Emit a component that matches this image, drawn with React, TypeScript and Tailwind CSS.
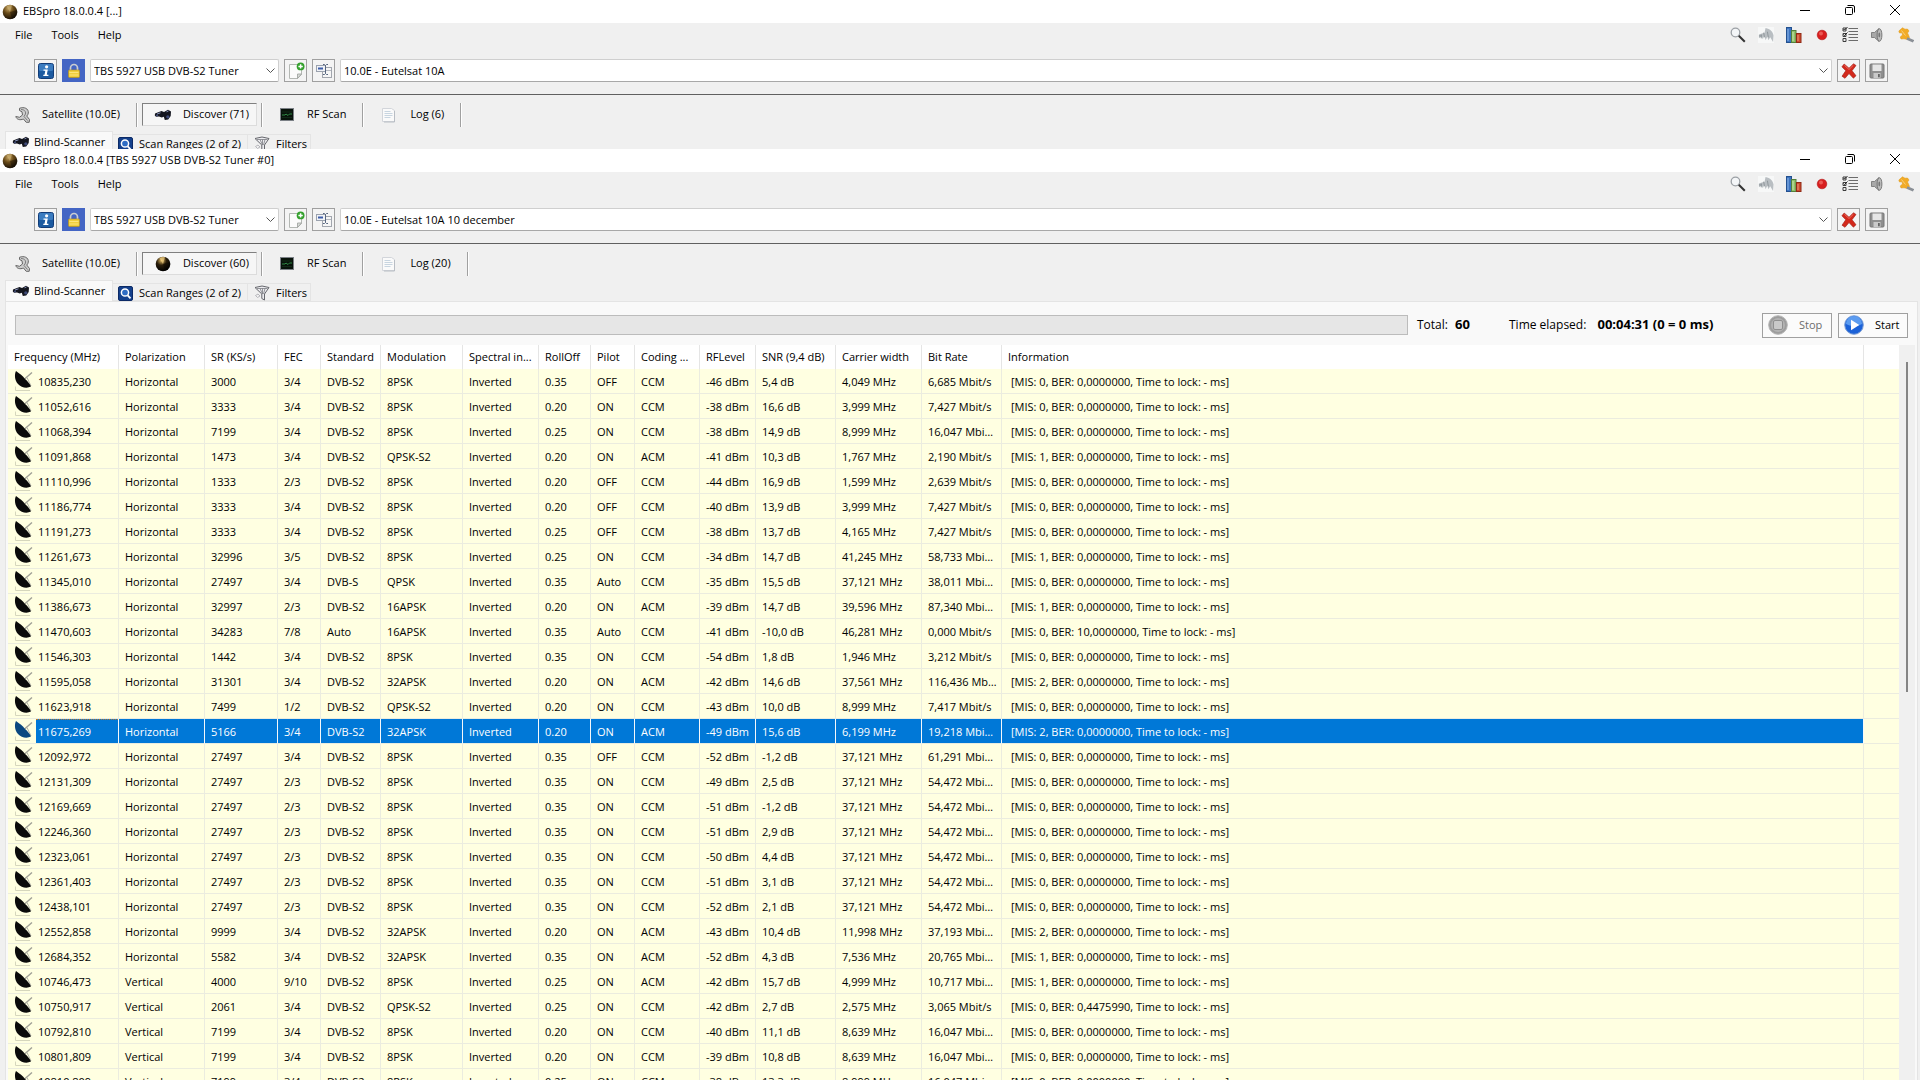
import { ReactNode } from 'react';

type Row = {
  freq: string;
  pol: string;
  sr: string;
  fec: string;
  standard: string;
  modulation: string;
  rollOff: string;
  pilot: string;
  coding: string;
  level: string;
  snr: string;
  width: string;
  bitRate: string;
  mis: number;
  ber?: string;
};

// freq|sr|fec|standard|modulation|rollOff|pilot|coding|level|snr|width|bitRate|mis|ber
const horizontal = [
  '10835,230|3000|3/4|DVB-S2|8PSK|0.35|OFF|CCM|-46|5,4|4,049|6,685|0',
  '11052,616|3333|3/4|DVB-S2|8PSK|0.20|ON|CCM|-38|16,6|3,999|7,427|0',
  '11068,394|7199|3/4|DVB-S2|8PSK|0.25|ON|CCM|-38|14,9|8,999|16,047|0',
  '11091,868|1473|3/4|DVB-S2|QPSK-S2|0.20|ON|ACM|-41|10,3|1,767|2,190|1',
  '11110,996|1333|2/3|DVB-S2|8PSK|0.20|OFF|CCM|-44|16,9|1,599|2,639|0',
  '11186,774|3333|3/4|DVB-S2|8PSK|0.20|OFF|CCM|-40|13,9|3,999|7,427|0',
  '11191,273|3333|3/4|DVB-S2|8PSK|0.25|OFF|CCM|-38|13,7|4,165|7,427|0',
  '11261,673|32996|3/5|DVB-S2|8PSK|0.25|ON|CCM|-34|14,7|41,245|58,733|1',
  '11345,010|27497|3/4|DVB-S|QPSK|0.35|Auto|CCM|-35|15,5|37,121|38,011|0',
  '11386,673|32997|2/3|DVB-S2|16APSK|0.20|ON|ACM|-39|14,7|39,596|87,340|1',
  '11470,603|34283|7/8|Auto|16APSK|0.35|Auto|CCM|-41|-10,0|46,281|0,000|0|10,0000000',
  '11546,303|1442|3/4|DVB-S2|8PSK|0.35|ON|CCM|-54|1,8|1,946|3,212|0',
  '11595,058|31301|3/4|DVB-S2|32APSK|0.20|ON|ACM|-42|14,6|37,561|116,436|2',
  '11623,918|7499|1/2|DVB-S2|QPSK-S2|0.20|ON|CCM|-43|10,0|8,999|7,417|0',
  '11675,269|5166|3/4|DVB-S2|32APSK|0.20|ON|ACM|-49|15,6|6,199|19,218|2',
  '12092,972|27497|3/4|DVB-S2|8PSK|0.35|OFF|CCM|-52|-1,2|37,121|61,291|0',
  '12131,309|27497|2/3|DVB-S2|8PSK|0.35|ON|CCM|-49|2,5|37,121|54,472|0',
  '12169,669|27497|2/3|DVB-S2|8PSK|0.35|ON|CCM|-51|-1,2|37,121|54,472|0',
  '12246,360|27497|2/3|DVB-S2|8PSK|0.35|ON|CCM|-51|2,9|37,121|54,472|0',
  '12323,061|27497|2/3|DVB-S2|8PSK|0.35|ON|CCM|-50|4,4|37,121|54,472|0',
  '12361,403|27497|2/3|DVB-S2|8PSK|0.35|ON|CCM|-51|3,1|37,121|54,472|0',
  '12438,101|27497|2/3|DVB-S2|8PSK|0.35|ON|CCM|-52|2,1|37,121|54,472|0',
  '12552,858|9999|3/4|DVB-S2|32APSK|0.20|ON|ACM|-43|10,4|11,998|37,193|2',
  '12684,352|5582|3/4|DVB-S2|32APSK|0.35|ON|ACM|-52|4,3|7,536|20,765|1',
];

const vertical = [
  '10746,473|4000|9/10|DVB-S2|8PSK|0.25|ON|ACM|-42|15,7|4,999|10,717|1',
  '10750,917|2061|3/4|DVB-S2|QPSK-S2|0.25|ON|CCM|-42|2,7|2,575|3,065|0|0,4475990',
  '10792,810|7199|3/4|DVB-S2|8PSK|0.20|ON|CCM|-40|11,1|8,639|16,047|0',
  '10801,809|7199|3/4|DVB-S2|8PSK|0.20|ON|CCM|-39|10,8|8,639|16,047|0',
  '10810,809|7199|3/4|DVB-S2|8PSK|0.25|ON|CCM|-38|13,3|8,999|16,047|0',
];

const parse = (line: string, pol: string): Row => {
  const [freq, sr, fec, standard, modulation, rollOff, pilot, coding, level, snr, width, bitRate, mis, ber] =
    line.split('|');
  return { freq, pol, sr, fec, standard, modulation, rollOff, pilot, coding, level, snr, width, bitRate, mis: Number(mis), ber };
};

const rows: Row[] = [
  ...horizontal.map((l) => parse(l, 'Horizontal')),
  ...vertical.map((l) => parse(l, 'Vertical')),
];

const selectedFreq = '11675,269';

const columns = [
  { label: 'Frequency (MHz)', width: 'w-[111px]' },
  { label: 'Polarization', width: 'w-[86px]' },
  { label: 'SR (KS/s)', width: 'w-[73px]' },
  { label: 'FEC', width: 'w-[43px]' },
  { label: 'Standard', width: 'w-[60px]' },
  { label: 'Modulation', width: 'w-[82px]' },
  { label: 'Spectral in...', width: 'w-[76px]' },
  { label: 'RollOff', width: 'w-[52px]' },
  { label: 'Pilot', width: 'w-[44px]' },
  { label: 'Coding ...', width: 'w-[65px]' },
  { label: 'RFLevel', width: 'w-[56px]' },
  { label: 'SNR (9,4 dB)', width: 'w-[80px]' },
  { label: 'Carrier width', width: 'w-[86px]' },
  { label: 'Bit Rate', width: 'w-[80px]' },
  { label: 'Information', width: '' },
];

/* ---------- icons ---------- */

const GlobeIcon = ({ bright = false }: { bright?: boolean }) => (
  <svg viewBox="0 0 16 16" className="size-4 shrink-0">
    <defs>
      <radialGradient id={bright ? 'globe-bright' : 'globe'} cx=".4" cy=".25" r=".75">
        <stop offset="0" stopColor={bright ? '#e8bf66' : '#c9a866'} />
        <stop offset=".45" stopColor={bright ? '#2a1e0a' : '#6a4c1a'} />
        <stop offset="1" stopColor={bright ? '#000' : '#1c1206'} />
      </radialGradient>
    </defs>
    <circle cx="8" cy="8" r="7.3" fill={bright ? 'url(#globe-bright)' : 'url(#globe)'} />
    <path d="M8 8 4.500 2.200A7 7 0 0 1 10 1.200Z" fill={bright ? '#f0cd80' : '#c8ac70'} opacity=".7" />
    <path d="M8 8 15 6a7.300 7.300 0 0 1-5 9Z" fill="#000" opacity=".35" />
  </svg>
);

const InfoIcon = () => (
  <svg viewBox="0 0 16 16" className="size-4">
    <rect x=".5" y=".5" width="15" height="15" rx="2" fill="#1c5aa0" stroke="#123c78" />
    <rect x="1" y="1" width="14" height="7" rx="1.5" fill="#3b7cc0" />
    <circle cx="8.6" cy="3.8" r="1.6" fill="#fff" />
    <path d="M5.5 6.6h4.3L8.8 11.8h1.6V13H5.3v-1.2h1.2l.8-4H5.5Z" fill="#fff" />
  </svg>
);

const LockIcon = () => (
  <svg viewBox="0 0 16 16" className="size-4">
    <path d="M4.5 8V5a3.5 3.5 0 0 1 7 0v3" fill="none" stroke="#c9ccd2" strokeWidth="1.7" />
    <rect x="2.5" y="7" width="11" height="7.5" rx="1" fill="#f0cf3c" stroke="#b8901c" strokeWidth=".7" />
    <path d="M3.5 9.5h9M3.5 12h9" stroke="#ffe98a" strokeWidth=".8" />
  </svg>
);

const PageAddIcon = () => (
  <svg viewBox="0 0 18 18" className="size-[18px]">
    <path d="M2.5 2.5h12v10l-4 4h-8Z" fill="#fbfbfb" stroke="#b4b8b4" />
    <path d="M14.5 12h-4v4.5Z" fill="#d9dcd9" stroke="#9a9e9a" strokeWidth=".8" />
    <circle cx="13.6" cy="4.4" r="3.9" fill="#33a02c" />
    <path d="M13.6 2.2v4.4M11.4 4.4h4.4" stroke="#fff" strokeWidth="1.5" />
  </svg>
);

const RenameIcon = () => (
  <svg viewBox="0 0 18 18" className="size-[18px]">
    <rect x="7.5" y="5.500" width="9" height="10" fill="#f6f6f6" stroke="#a2a6ae" />
    <path d="M8 8.500h8" stroke="#b4b8c0" />
    <rect x="1.500" y="3.500" width="9" height="6" fill="#f1f3f7" stroke="#9ba2ae" />
    <path d="M3 6.500h5" stroke="#3d5da8" strokeWidth="2" />
    <path d="M8 2.500h1.500l1 1 1-1H13M8 12.500h1.500l1-1 1 1H13M10.500 3.500v8" fill="none" stroke="#56657f" />
  </svg>
);

const DeleteIcon = () => (
  <svg viewBox="0 0 16 16" className="size-4">
    <path
      d="M3.200 1 8 5.200 12.500.7l2.500 1.800-4 5.200 4 5-2.600 2.500L8 10.600 4 15.300 1 13.200l3.800-5.500L.9 3.800Z"
      fill="#d3291c"
      stroke="#9c1a10"
      strokeWidth=".6"
    />
    <path d="M3.400 2.200 8 6.500l4.400-4.300" fill="none" stroke="#ee7468" strokeWidth=".9" />
  </svg>
);

const SaveIcon = () => (
  <svg viewBox="0 0 16 16" className="size-4">
    <rect x="1" y="1" width="14" height="14" rx="1" fill="#8f8f8f" stroke="#777" />
    <rect x="3.500" y="1.500" width="9" height="6.500" fill="#e6e6e6" />
    <rect x="4.500" y="10" width="7" height="5" fill="#c9c9c9" />
    <rect x="9" y="11" width="1.800" height="3.300" fill="#666" />
  </svg>
);

const WrenchIcon = () => (
  <svg viewBox="0 0 16 16" className="size-4">
    <path
      d="M4.500 1.300C9-.5 13.800 1.500 13.300 6c-.1 1.300-.8 2.300-1.600 3l2.800 3.500-.3 2.800h-3L8.500 12C5 13.500 1.500 12.500.8 9.500l3.700.8L7.500 8 7 4.800 4.500 3.500Z"
      fill="#cdcdcd"
      stroke="#666"
    />
    <path d="M6 2.500c3 0 5 1.500 4.500 4.500L9 9.500l3.500 4" fill="none" stroke="#7c7c7c" />
  </svg>
);

const BinocularsIcon = () => (
  <svg viewBox="0 0 18 12" className="h-3 w-[18px]">
    <path d="M1 4.500 7.500 2l2.500 1L14 .8l3 1.700-.3 4.500-2.500 3.500-3.400.5-1-3.200-2 .7L5 7.500 2 7.800.8 6.500Z" fill="#14161f" />
    <path d="M12.500 2.800 14.500 2M3 5l3.500-1.200" stroke="#8590b8" />
    <circle cx="13.800" cy="7.800" r="1.600" fill="#3e4a78" />
    <circle cx="3" cy="6.400" r=".9" fill="#4a5688" />
  </svg>
);

const ScreenIcon = () => (
  <svg viewBox="0 0 14 13" className="h-[13px] w-3.5">
    <rect x=".5" y=".5" width="13" height="12" fill="#08130b" stroke="#7b8086" />
    <path d="M2 7h3l1-1 2 1.500L9.500 6H12" fill="none" stroke="#2f8a45" />
    <path d="M2 4h10M2 9.500h10" stroke="#173a20" strokeWidth=".6" />
  </svg>
);

const LogIcon = () => (
  <svg viewBox="0 0 16 16" className="size-4">
    <path d="M1.500 1.500h9l3 2v11h-12Z" fill="#fafafa" stroke="#d2d5da" />
    <path d="M13.500 4v11H3" fill="none" stroke="#b8bdc4" />
    <path d="M3.500 4.500h6M3.500 6.500h8M3.500 8.500h8M3.500 10.500h6" stroke="#c2d0dc" strokeWidth=".9" />
  </svg>
);

const ScanIcon = () => (
  <svg viewBox="0 0 15 15" className="size-[15px]">
    <rect x=".5" y=".5" width="14" height="14" rx="1.500" fill="#14408c" stroke="#0c2a66" />
    <circle cx="7" cy="6.500" r="3.600" fill="#2e6cc4" stroke="#fff" strokeWidth="1.500" />
    <path d="m9.700 9.300 2.800 3" stroke="#fff" strokeWidth="1.900" />
  </svg>
);

const FilterIcon = () => (
  <svg viewBox="0 0 16 16" className="size-4">
    <path d="M1 2.500 8 1l7 1.500L10.500 9v6l-2.700-1.500V9Z" fill="#ececef" stroke="#65666c" />
    <path d="M3 3.500h10.500M6 3.500 8.500 9M11 3.500 9.500 9M8.500 3.500V9" fill="none" stroke="#7c7d84" strokeWidth=".8" />
    <path d="M1.500 10.500 4 9l2 2-2.500 1.500Z" fill="none" stroke="#a8a8ae" strokeWidth=".8" />
  </svg>
);

const MagnifierIcon = () => (
  <svg viewBox="0 0 16 16" className="size-4">
    <circle cx="5.500" cy="5.500" r="4.300" fill="#f4f6f8" stroke="#9ba0a5" strokeWidth="1.300" />
    <path d="m8.800 8.800 6 6" stroke="#333" strokeWidth="2" />
  </svg>
);

const SatelliteIcon = () => (
  <svg viewBox="0 0 17 17" className="size-4">
    <path d="M0 0h17v17H0Z" fill="#f7f8f8" />
    <path d="M8 1c5 1 8 4 8.500 8L16 16l-3-5-2 3-1-4-2 4-1-5-2 4-1-3-3 2 0-4 3-1 3-1Z" fill="#b9bec2" />
    <path d="M1 9.500h3M6 6l1 5M10 5l1 6M3.500 8v4" stroke="#8d9499" />
  </svg>
);

const ChartIcon = () => (
  <svg viewBox="0 0 16 16" className="size-4">
    <rect x=".5" y=".5" width="5" height="15" fill="#3d74c0" stroke="#23508f" />
    <rect x="5.500" y="3.500" width="4.500" height="12" fill="#8fbf6a" stroke="#54803a" />
    <rect x="10.500" y="6.500" width="4.500" height="9" fill="#cf4a2c" stroke="#8f2a16" />
    <path d="M2 2v12" stroke="#8fb6e8" />
    <path d="M7 5v9" stroke="#c9e6b0" />
    <path d="M12 8v6" stroke="#ee9580" />
  </svg>
);

const RecordIcon = () => (
  <svg viewBox="0 0 16 16" className="size-4">
    <circle cx="8" cy="8" r="4.800" fill="#d81f1f" stroke="#b01616" strokeWidth=".6" />
    <circle cx="7" cy="6.500" r="2" fill="#ec5a55" />
  </svg>
);

const ListIcon = () => (
  <svg viewBox="0 0 16 16" className="size-4">
    <path d="M1 1h3v3H1ZM1 6.500h3v3H1ZM1 11.500h3v3H1Z" fill="#eee" stroke="#3c3c3c" />
    <path d="m1.500 2 1 1L5.500 0M1.500 7.500l1 1 3-3" fill="none" stroke="#222" />
    <path d="M6.500 1.500H16M6.500 4.500H16M6.500 7.500H16M6.500 10.500H16M6.500 13.500H16" stroke="#6c6c6c" />
  </svg>
);

const SpeakerIcon = () => (
  <svg viewBox="0 0 16 16" className="size-4">
    <path d="M1.500 5.500h3L9 1.500v13L4.500 10.500h-3Z" fill="#a9a9a9" stroke="#6e6e6e" strokeWidth=".8" />
    <ellipse cx="9.500" cy="8" rx="2.400" ry="6.200" fill="#bdbdbd" stroke="#6e6e6e" strokeWidth=".9" />
    <ellipse cx="9.300" cy="8" rx=".9" ry="2.400" fill="#777" />
  </svg>
);

const PinIcon = () => (
  <svg viewBox="0 0 16 16" className="size-4">
    <path d="M.8 4 4.500.8 7 2.200 9.500 2l1.500 2-1.500 2 1 2 1 2.500-2 2L6 11.800 3 12l-.8-2L4.500 8 4 5.800 1.500 6Z" fill="#f2ab26" stroke="#dd9818" strokeWidth=".5" />
    <path d="m3.500 3.500 4 5" stroke="#fad07a" />
    <path d="m9 11.500 6.500 2.800" stroke="#8a8f96" strokeWidth="2.800" />
  </svg>
);

const ChevronIcon = () => (
  <svg viewBox="0 0 9 5" className="h-[5px] w-[9px]">
    <path d="m.5.5 4 4 4-4" fill="none" stroke="#555" />
  </svg>
);

const DishIcon = ({ selected }: { selected: boolean }) => (
  <svg viewBox="0 0 19 23" className="h-[23px] w-[19px] shrink-0">
    <path d="M10 10.500 18 3.500" stroke="#a0a096" strokeWidth="1.400" />
    <path d="M13 8.500 17 17" stroke="#b4b4a8" />
    <path
      d="M2 2C5.500 4.500 9 7 11 10c2.500 2 4.500 4.500 6 7.500C13 19.800 7 18.500 4 15 .4 11 .4 5 2 2Z"
      fill={selected ? '#0b4880' : '#0a0a0a'}
    />
    <path d="M1.500 17.500v4H16" fill="none" stroke="#d6d6bc" />
  </svg>
);

const StopIcon = () => (
  <svg viewBox="0 0 20 20" className="size-5">
    <circle cx="10" cy="10" r="9.300" fill="#9d9d9d" stroke="#b5b5b5" />
    <circle cx="10" cy="10" r="7" fill="#b2b2b2" />
    <rect x="5.500" y="5.500" width="9" height="9" rx="1.500" fill="#c9c9c9" stroke="#8f8f8f" />
  </svg>
);

const StartIcon = () => (
  <svg viewBox="0 0 20 20" className="size-5">
    <circle cx="10" cy="10" r="9.300" fill="#1c62d8" stroke="#7d9fd4" />
    <path d="M2 9a8 8 0 0 1 16 0c-4 2.500-12 2.500-16 0Z" fill="#5c9cf0" />
    <path d="M7 4.800 15.300 10 7 15.200Z" fill="#fff" />
  </svg>
);

/* ---------- window parts ---------- */

const IconButton = ({ label, children, active = false }: { label: string; children: ReactNode; active?: boolean }) => (
  <button
    aria-label={label}
    className={
      'flex size-[23px] shrink-0 items-center justify-center border ' +
      (active ? 'border-[#4465c4] bg-[#4465c4]' : 'border-[#a0a0a0] bg-[#f4f4f4]')
    }
  >
    {children}
  </button>
);

const Combo = ({ label, value, className }: { label: string; value: string; className: string }) => (
  <div className={'relative flex ' + className}>
    <select
      aria-label={label}
      className="h-[23px] w-full appearance-none rounded-xs border border-[#cfcfcf] border-b-[#a8a8a8] bg-white pr-6 pl-[3px] text-[11px] leading-none"
    >
      <option>{value}</option>
    </select>
    <span className="pointer-events-none absolute inset-y-0 right-1 flex items-center">
      <ChevronIcon />
    </span>
  </div>
);

const Divider = () => <span className="h-6 w-0.5 border-r border-l border-r-white border-l-[#a0a0a0]" />;

type WindowProps = {
  title: string;
  satellite: string;
  discovered: number;
  logCount: number;
  scanning?: boolean;
  className?: string;
  children?: ReactNode;
};

const AppWindow = ({ title, satellite, discovered, logCount, scanning = false, className = '', children }: WindowProps) => (
  <section className={'flex flex-col overflow-hidden bg-[#f0f0f0] ' + className}>
    <header className="flex h-[23px] shrink-0 items-center bg-white pl-0.5">
      <GlobeIcon />
      <h1 className="ml-[5px] flex-1 text-[11px]">{title}</h1>
      <div className="flex items-center gap-[33px] pr-[19px] pb-[3px]">
        <button aria-label="Minimize">
          <svg viewBox="0 0 12 12" className="size-3">
            <path d="M1 6.500h10" stroke="#000" />
          </svg>
        </button>
        <button aria-label="Restore">
          <svg viewBox="0 0 12 12" className="size-3">
            <rect x="1.500" y="3.500" width="7" height="7" rx="1" fill="none" stroke="#000" />
            <path d="M3.500 1.500H9A1.500 1.500 0 0 1 10.500 3v5.500" fill="none" stroke="#000" />
          </svg>
        </button>
        <button aria-label="Close">
          <svg viewBox="0 0 12 12" className="size-3">
            <path d="m1 1 10 10M11 1 1 11" stroke="#000" />
          </svg>
        </button>
      </div>
    </header>

    <div className="flex h-6 shrink-0 items-center pr-1.5 pl-[15px] text-[11px]">
      <nav className="flex flex-1 gap-[19px]">
        <button>File</button>
        <button>Tools</button>
        <button>Help</button>
      </nav>
      <div className="flex items-center gap-3">
        <button aria-label="Search"><MagnifierIcon /></button>
        <button aria-label="Satellite"><SatelliteIcon /></button>
        <button aria-label="Statistics"><ChartIcon /></button>
        <button aria-label="Record"><RecordIcon /></button>
        <button aria-label="List"><ListIcon /></button>
        <button aria-label="Sound"><SpeakerIcon /></button>
        <button aria-label="Pin"><PinIcon /></button>
      </div>
    </div>

    <div className="flex h-12 shrink-0 items-center gap-[5px] border-b border-[#606060] pr-8 pl-[34px]">
      <IconButton label="Device info"><InfoIcon /></IconButton>
      <IconButton label="Lock device" active><LockIcon /></IconButton>
      <Combo label="Device" value="TBS 5927 USB DVB-S2 Tuner" className="w-[189px]" />
      <IconButton label="New satellite"><PageAddIcon /></IconButton>
      <IconButton label="Rename satellite"><RenameIcon /></IconButton>
      <Combo label="Satellite" value={satellite} className="flex-1" />
      <IconButton label="Delete satellite"><DeleteIcon /></IconButton>
      <IconButton label="Save"><SaveIcon /></IconButton>
    </div>

    <div className="flex h-9 shrink-0 items-center pt-[3px] pl-[15px] text-[11px]">
      <button className="flex items-center gap-[11px] pr-4">
        <WrenchIcon /> Satellite (10.0E)
      </button>
      <Divider />
      <button className="mx-1 flex h-[23px] w-[115px] items-center gap-[11px] border border-[#808080] border-r-[#dcdcdc] border-b-[#dcdcdc] bg-[#f6f6f6] pl-[11px]">
        <span className="flex w-[18px] justify-center">{scanning ? <GlobeIcon bright /> : <BinocularsIcon />}</span>
        Discover ({discovered})
      </button>
      <Divider />
      <button className="flex items-center gap-[13px] pr-4 pl-[17px]">
        <ScreenIcon /> RF Scan
      </button>
      <Divider />
      <button className="flex items-center gap-[13px] pr-4 pl-[17px]">
        <LogIcon /> Log ({logCount})
      </button>
      <Divider />
    </div>

    <div className="flex h-[21px] shrink-0 items-end pl-[5px] text-[11px]">
      <button className="flex h-[21px] w-[108px] items-center gap-1 border border-b-0 border-[#e4e4e4] bg-[#f9f9f9] pl-1.5">
        <BinocularsIcon /> Blind-Scanner
      </button>
      <button className="flex h-[18px] w-[135px] items-center gap-[6px] border border-l-0 border-[#e4e4e4] pt-0.5 pl-[5px]">
        <ScanIcon /> Scan Ranges (2 of 2)
      </button>
      <button className="flex h-[18px] w-[63px] items-center gap-[6px] border border-l-0 border-[#e4e4e4] pt-0.5 pl-1.5">
        <FilterIcon /> Filters
      </button>
    </div>
    {children}
  </section>
);

const ResultRow = ({ row }: { row: Row }) => {
  const selected = row.freq === selectedFreq;
  const cell =
    'truncate border-r border-b pt-1 align-top ' +
    (selected ? 'border-r-[#f4f8fb] border-b-[#e8ecdf] bg-[#0078d7] text-white' : 'border-[#ebecdf]');
  const values = [
    row.pol,
    row.sr,
    row.fec,
    row.standard,
    row.modulation,
    'Inverted',
    row.rollOff,
    row.pilot,
    row.coding,
    `${row.level} dBm`,
    `${row.snr} dB`,
    `${row.width} MHz`,
  ];
  return (
    <tr className="h-[25px]">
      <td className={'border-r border-b p-0 ' + (selected ? 'border-r-[#f4f8fb] border-b-[#e8ecdf]' : 'border-[#ebecdf]')}>
        <div className="flex h-6 pl-1.5">
          <DishIcon selected={selected} />
          <span
            className={
              'ml-[3px] flex-1 pl-0.5 ' +
              (selected ? 'border-t border-dotted border-[#b07838] bg-[#0078d7] pt-[3px] text-white' : 'pt-1')
            }
          >
            {row.freq}
          </span>
        </div>
      </td>
      {values.map((value, i) => (
        <td key={i} className={cell + ' pl-[6px]'}>{value}</td>
      ))}
      <td className={cell + ' pr-1 pl-[6px]'}>{row.bitRate} Mbit/s</td>
      <td className={cell + ' pl-[9px]'}>
        [MIS: {row.mis}, BER: {row.ber ?? '0,0000000'}, Time to lock: - ms]
      </td>
      <td className="border-b border-[#ebecdf]" />
    </tr>
  );
};

const App: React.FC = () => {
  return (
    <div className="flex h-screen flex-col overflow-hidden bg-white font-['Open_Sans','Noto_Sans',sans-serif] text-black">
      <AppWindow
        title="EBSpro 18.0.0.4 [...]"
        satellite="10.0E - Eutelsat 10A"
        discovered={71}
        logCount={6}
        className="h-[149px] shrink-0"
      />
      <AppWindow
        title="EBSpro 18.0.0.4 [TBS 5927 USB DVB-S2 Tuner #0]"
        satellite="10.0E - Eutelsat 10A 10 december"
        discovered={60}
        logCount={20}
        scanning
        className="min-h-0 flex-1"
      >
        <div className="mr-[2px] ml-[5px] flex min-h-0 flex-1 flex-col border-t border-r border-l border-[#e4e4e4] bg-[#f9f9f9]">
          <div className="flex h-[43px] shrink-0 items-center pt-[3px] pr-[9px] pl-[9px] text-[12px]">
            <div
              role="progressbar"
              aria-label="Scan progress"
              aria-valuenow={0}
              className="h-5 flex-1 border border-[#bcbcbc] bg-[#e6e6e6]"
            />
            <div className="flex w-[354px] items-baseline pl-[9px]">
              <span className="w-[92px]">Total: <b className="ml-1 text-[13px]">60</b></span>
              <span>Time elapsed: <b className="ml-2 text-[13px]">00:04:31 (0 = 0 ms)</b></span>
            </div>
            <button disabled className="flex h-[25px] w-[70px] items-center gap-[11px] border border-[#a0a0a0] bg-[#fbfbfb] pl-[5px] text-[11px] text-[#6d6d6d]">
              <StopIcon /> Stop
            </button>
            <button className="ml-[6px] flex h-[25px] w-[70px] items-center gap-[11px] border border-[#a0a0a0] bg-[#fbfbfb] pl-[5px] text-[11px]">
              <StartIcon /> Start
            </button>
          </div>

          <div className="flex min-h-0 flex-1 pr-0.5 pl-0.5">
            <div className="min-w-0 flex-1 overflow-hidden bg-[#ffffe1]">
              <table className="w-full table-fixed border-separate border-spacing-0 text-left text-[11px] leading-[18px]">
                <thead>
                  <tr className="h-6 bg-white">
                    {columns.map((c) => (
                      <th key={c.label} className={'border-r border-[#e5e5e5] py-0 pl-[6px] font-normal whitespace-nowrap ' + c.width}>
                        {c.label}
                      </th>
                    ))}
                    <th className="w-[35px]" aria-label="Empty" />
                  </tr>
                </thead>
                <tbody>
                  {rows.map((row) => (
                    <ResultRow key={row.freq} row={row} />
                  ))}
                </tbody>
              </table>
            </div>
            <div className="flex w-4 justify-center bg-[#f0f0f0] pt-[17px]">
              <div className="h-[46%] w-0.5 bg-[#858585]" />
            </div>
          </div>
        </div>
      </AppWindow>
    </div>
  );
};

export default App;
